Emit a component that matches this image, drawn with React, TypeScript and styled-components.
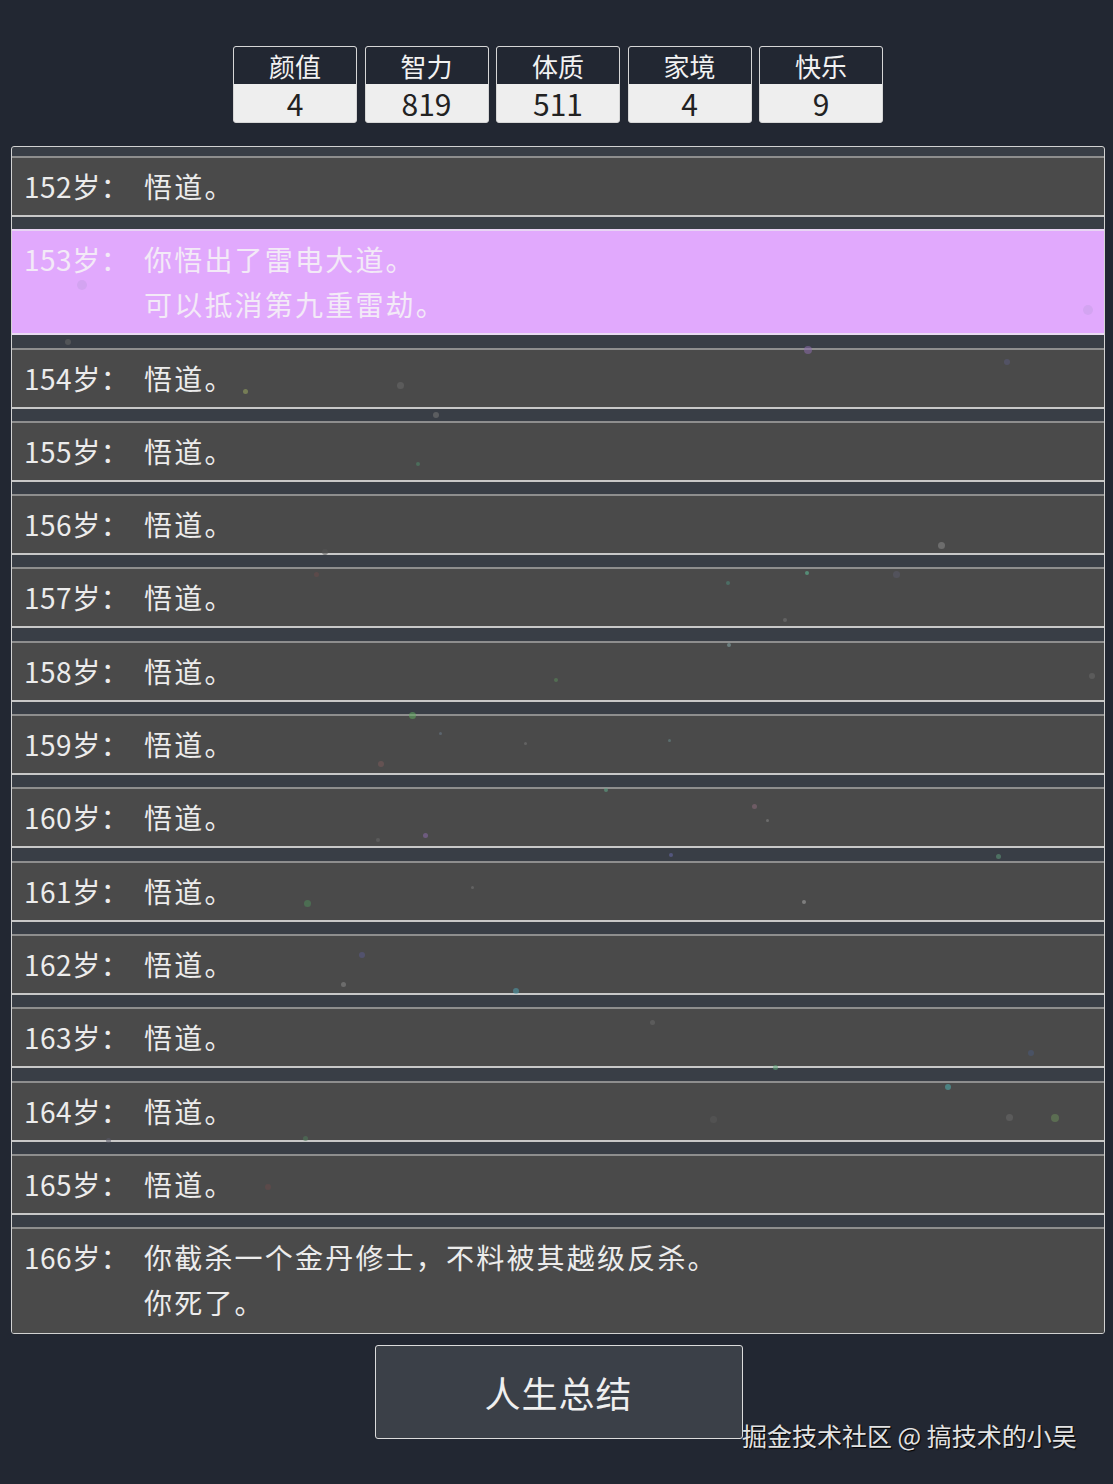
import React from "react";
import styled, { createGlobalStyle } from "styled-components";

const GlobalStyle = createGlobalStyle`
  html, body {
    margin: 0;
    padding: 0;
    background: #222732;
  }
  body {
    font-family: "Noto Sans CJK SC", "Noto Sans", sans-serif;
    color: #eaeaea;
  }
`;

type Stat = { label: string; value: number };
type Event = { age: number; lines: string[]; grade?: number };

const stats: Stat[] = [
  { label: "颜值", value: 4 },
  { label: "智力", value: 819 },
  { label: "体质", value: 511 },
  { label: "家境", value: 4 },
  { label: "快乐", value: 9 },
];

const events: Event[] = [
  { age: 152, lines: ["悟道。"] },
  { age: 153, lines: ["你悟出了雷电大道。", "可以抵消第九重雷劫。"], grade: 3 },
  ...Array.from({ length: 12 }, (_, i) => ({ age: 154 + i, lines: ["悟道。"] })),
  { age: 166, lines: ["你截杀一个金丹修士，不料被其越级反杀。", "你死了。"] },
];

// [x, y, size, color]
const dots: [number, number, number, string][] = [
  [245, 391, 5, "#9aa860"], [400, 385, 7, "#6a6a6a"], [436, 415, 6, "#777"],
  [418, 464, 4, "#4f8a6a"], [325, 552, 6, "#555"], [316, 574, 5, "#6a4a4a"],
  [941, 545, 7, "#8a8a8a"], [896, 574, 7, "#5a5a6a"], [807, 573, 4, "#5fc39a"],
  [728, 583, 4, "#4f8a7a"], [785, 620, 4, "#777"], [729, 645, 4, "#8aa"],
  [556, 680, 4, "#5a8a5a"], [412, 715, 7, "#5faa5f"], [440, 733, 3, "#6a7a8a"],
  [525, 743, 3, "#777"], [669, 740, 3, "#6a8a8a"], [381, 764, 6, "#7a5a5a"],
  [606, 790, 4, "#5faa8a"], [754, 806, 5, "#8a6a7a"], [767, 820, 3, "#888"],
  [425, 835, 5, "#8a6aaa"], [378, 840, 4, "#6a6a6a"], [671, 855, 4, "#6a6aaa"],
  [998, 856, 5, "#5f9a7a"], [307, 903, 7, "#4f8a5a"], [472, 887, 3, "#777"],
  [804, 902, 4, "#aaa"], [362, 955, 6, "#5a5a8a"], [343, 984, 5, "#888"],
  [516, 991, 6, "#4fa0b0"], [652, 1022, 5, "#6a6a6a"], [1031, 1053, 6, "#4a5a7a"],
  [775, 1067, 5, "#5faa7a"], [948, 1087, 6, "#4fb0b0"], [1055, 1118, 8, "#6a8a5a"],
  [713, 1119, 7, "#5a5a5a"], [1009, 1117, 7, "#6a6a6a"], [305, 1138, 5, "#4f7a5a"],
  [108, 1140, 5, "#5a5a6a"], [268, 1187, 6, "#6a4a4a"], [808, 350, 8, "#8a6aaa"],
  [1007, 362, 6, "#5a5a7a"], [82, 285, 10, "#c9a0e8"], [1088, 310, 10, "#c9a0e8"],
  [68, 342, 6, "#666"], [1092, 676, 6, "#6a6a6a"],
];

export default function App() {
  return (
    <Page>
      <GlobalStyle />
      <StatsRow>
        {stats.map((s) => (
          <StatBox key={s.label}>
            <StatLabel>{s.label}</StatLabel>
            <StatValue>{s.value}</StatValue>
          </StatBox>
        ))}
      </StatsRow>

      <Trajectory>
        {events.map((e) => (
          <Row key={e.age} $grade={e.grade}>
            <Age>{e.age}岁：</Age>
            <Content>
              {e.lines.map((l) => (
                <div key={l}>{l}</div>
              ))}
            </Content>
          </Row>
        ))}
      </Trajectory>

      <Footer>
        <SummaryButton>人生总结</SummaryButton>
      </Footer>

      <Particles>
        {dots.map(([x, y, s, c], i) => (
          <Dot key={i} style={{ left: x - s / 2, top: y - s / 2, width: s, height: s, background: c }} />
        ))}
      </Particles>

      <Watermark>掘金技术社区 @ 搞技术的小吴</Watermark>
    </Page>
  );
}

const Page = styled.div`
  position: relative;
  width: 1113px;
  min-height: 1484px;
  box-sizing: border-box;
  padding: 46px 8px 0 11px;
  overflow: hidden;
`;

const StatsRow = styled.div`
  display: flex;
  justify-content: center;
  gap: 7.5px;
`;

const StatBox = styled.div`
  box-sizing: border-box;
  width: 124px;
  border: 1px solid #d6d6d6;
  border-radius: 3px;
  text-align: center;
  background: #eeeeee;
`;

const StatLabel = styled.div`
  line-height: 37px;
  font-size: 26px;
  font-weight: 400;
  color: #f2f2f2;
  background: #222732;
  border-radius: 2px 2px 0 0;
`;

const StatValue = styled.div`
  line-height: 38px;
  font-size: 30px;
  font-weight: 400;
  color: #222;
`;

const Trajectory = styled.div`
  margin-top: 23px;
  border: 1px solid #d2d2d2;
  border-radius: 3px;
  background: #393e46;
  padding-top: 9px;
  display: flex;
  flex-direction: column;
  gap: 12.3px;
  overflow: hidden;
`;

const Row = styled.div<{ $grade?: number }>`
  display: flex;
  align-items: flex-start;
  padding: 6px 12px;
  font-size: 28px;
  letter-spacing: 2.2px;
  line-height: 45px;
  border-top: 2px solid ${(p) => (p.$grade ? "#e8d4f4" : "#8e8e8e")};
  border-bottom: 2px solid ${(p) => (p.$grade ? "#eadcf2" : "#c8c8c8")};
  background: ${(p) => (p.$grade ? "#e1a9fd" : "#4a4a4a")};
  color: ${(p) => (p.$grade ? "#f3eaf7" : "#ececec")};

  &:last-child {
    border-bottom: none;
    padding-bottom: 8px;
  }
`;

const Age = styled.div`
  width: 120px;
  flex-shrink: 0;
  letter-spacing: 0.5px;
`;

const Content = styled.div`
  flex: 1;
`;

const Footer = styled.div`
  display: flex;
  justify-content: center;
  padding: 11px 0 0 1px;
`;

const SummaryButton = styled.button`
  width: 368px;
  height: 94px;
  border: 1px solid #dcdcdc;
  border-radius: 3px;
  background: #3b4048;
  color: #efefef;
  font-family: "Noto Sans CJK SC", "Noto Sans", sans-serif;
  font-size: 36px;
  font-weight: 400;
  letter-spacing: 1px;
  cursor: pointer;
`;

const Particles = styled.div`
  position: absolute;
  inset: 0;
  pointer-events: none;
`;

const Dot = styled.span`
  position: absolute;
  border-radius: 50%;
  opacity: 0.55;
  filter: blur(0.6px);
`;

const Watermark = styled.div`
  position: absolute;
  left: 742px;
  top: 1417px;
  font-size: 25px;
  color: #e2e2e2;
  text-shadow: 1px 1px 1px #000;
  pointer-events: none;
  white-space: nowrap;
`;
